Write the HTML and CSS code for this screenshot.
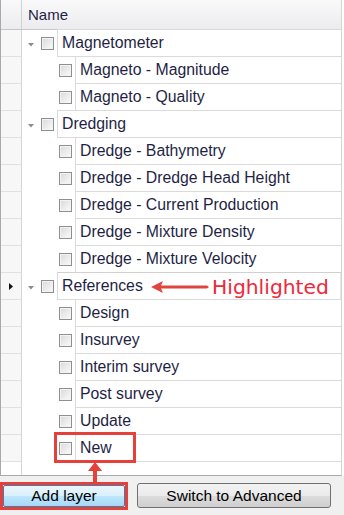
FILE: index.html
```html
<!DOCTYPE html>
<html>
<head>
<meta charset="utf-8">
<link rel="stylesheet" href="styles.css">
</head>
<body>
<div class="grid">
  <div class="hdr"><div class="hind"></div><div class="hname">Name</div></div>

  <div class="row"><div class="ind"></div><div class="exp"><svg class="tri" width="6" height="4" viewBox="0 0 6 4"><polygon points="0,0 6,0 3,3.5" fill="#8c8c8c"/></svg><span class="cb"></span></div><div class="cell gcell">Magnetometer</div></div>
  <div class="row"><div class="ind"></div><div class="pad"></div><div class="cbw"><span class="cb"></span></div><div class="cell">Magneto - Magnitude</div></div>
  <div class="row"><div class="ind"></div><div class="pad"></div><div class="cbw"><span class="cb"></span></div><div class="cell">Magneto - Quality</div></div>

  <div class="row"><div class="ind"></div><div class="exp"><svg class="tri" width="6" height="4" viewBox="0 0 6 4"><polygon points="0,0 6,0 3,3.5" fill="#8c8c8c"/></svg><span class="cb"></span></div><div class="cell gcell">Dredging</div></div>
  <div class="row"><div class="ind"></div><div class="pad"></div><div class="cbw"><span class="cb"></span></div><div class="cell">Dredge - Bathymetry</div></div>
  <div class="row"><div class="ind"></div><div class="pad"></div><div class="cbw"><span class="cb"></span></div><div class="cell">Dredge - Dredge Head Height</div></div>
  <div class="row"><div class="ind"></div><div class="pad"></div><div class="cbw"><span class="cb"></span></div><div class="cell">Dredge - Current Production</div></div>
  <div class="row"><div class="ind"></div><div class="pad"></div><div class="cbw"><span class="cb"></span></div><div class="cell">Dredge - Mixture Density</div></div>
  <div class="row"><div class="ind"></div><div class="pad"></div><div class="cbw"><span class="cb"></span></div><div class="cell">Dredge - Mixture Velocity</div></div>

  <div class="row"><div class="ind"><svg class="focus" width="4" height="7" viewBox="0 0 4 7"><polygon points="0,0 4,3.5 0,7" fill="#111"/></svg></div><div class="exp"><svg class="tri" width="6" height="4" viewBox="0 0 6 4"><polygon points="0,0 6,0 3,3.5" fill="#8c8c8c"/></svg><span class="cb"></span></div><div class="cell gcell sel">References</div></div>
  <div class="row"><div class="ind"></div><div class="pad"></div><div class="cbw"><span class="cb"></span></div><div class="cell">Design</div></div>
  <div class="row"><div class="ind"></div><div class="pad"></div><div class="cbw"><span class="cb"></span></div><div class="cell">Insurvey</div></div>
  <div class="row"><div class="ind"></div><div class="pad"></div><div class="cbw"><span class="cb"></span></div><div class="cell">Interim survey</div></div>
  <div class="row"><div class="ind"></div><div class="pad"></div><div class="cbw"><span class="cb"></span></div><div class="cell">Post survey</div></div>
  <div class="row"><div class="ind"></div><div class="pad"></div><div class="cbw"><span class="cb"></span></div><div class="cell">Update</div></div>
  <div class="row"><div class="ind"></div><div class="pad"></div><div class="cbw"><span class="cb"></span></div><div class="cell">New</div></div>
  <div class="filler"><div class="ind fill"></div></div>
</div>

<div class="panel">
  <div class="hl-btn"><button class="btn add">Add layer</button></div>
  <button class="btn adv">Switch to Advanced</button>
</div>

<div class="box-new"></div>
<svg class="arrow-up" width="14" height="20" viewBox="0 0 14 20"><polygon points="7,0 14,9 9,9 9,20 5,20 5,9 0,9" fill="#e5403a"/></svg>
<svg class="arrow-left" width="58" height="12" viewBox="0 0 58 12"><polygon points="0,6 12,0 10,4.5 56,4.5 58,6 56,7.5 10,7.5 12,12" fill="#e0443e"/></svg>
<div class="hl-text">Highlighted</div>
</body>
</html>
```

FILE: styles.css
```css
html, body {
  margin: 0;
  padding: 0;
}
body {
  width: 344px;
  height: 515px;
  background: #ffffff;
  position: relative;
  overflow: hidden;
  font-family: "Liberation Sans", Arial, sans-serif;
}
.grid {
  width: 340px;
  height: 475px;
  border-left: 1px solid #a9a9a9;
  border-right: 1px solid #d6d6d6;
  border-bottom: 1px solid #a9a9a9;
  background: #fff;
  display: flex;
  flex-direction: column;
}
.hdr {
  display: flex;
  height: 29px;
  flex: none;
  border-bottom: 1px solid #c6c6c6;
  background: linear-gradient(#f9f9fa, #ececef);
}
.hind {
  width: 20px;
  border-right: 1px solid #d2d2d2;
}
.hname {
  padding-left: 6px;
  line-height: 29px;
  font-size: 15px;
  color: #1f1f46;
}
.row {
  display: flex;
  height: 27px;
  flex: none;
}
.ind {
  width: 20px;
  flex: none;
  height: 26px;
  border-right: 1px solid #d4d4d4;
  border-bottom: 1px solid #e0e0e0;
  background: #f7f7f7;
  display: flex;
  align-items: center;
}
.focus {
  margin-left: 8px;
}
.exp {
  width: 35px;
  flex: none;
  display: flex;
  align-items: center;
}
.tri {
  margin-left: 6px;
  margin-right: 7px;
  margin-top: 2px;
}
.pad {
  width: 35px;
  flex: none;
}
.cbw {
  width: 18px;
  flex: none;
  display: flex;
  align-items: center;
}
.cbw .cb {
  margin-left: 2px;
}
.cb {
  width: 11px;
  height: 11px;
  border: 1px solid #8e8f8f;
  background: linear-gradient(135deg, #d9d9d9, #fbfbfb);
  box-shadow: inset 0 0 0 1px #f3f3f3;
  display: block;
}
.cell {
  flex: 1;
  height: 26px;
  line-height: 26px;
  border-left: 1px solid #dadada;
  border-bottom: 1px solid #dadada;
  padding-left: 4px;
  font-size: 15.8px;
  color: #1f1f46;
  white-space: nowrap;
}
.gcell {
  box-shadow: 0 -1px 0 #dadada;
}
.sel {
  box-shadow: 0 -1px 0 #d0d0d0, inset -1px 0 0 #e4e4e4;
}
.filler {
  flex: 1;
  display: flex;
}
.ind.fill {
  height: auto;
  border-bottom: none;
  background: #fff;
}
.panel {
  height: 39px;
  background: #f0f0f0;
  display: flex;
  align-items: center;
  padding-left: 0;
}
.hl-btn {
  width: 122px;
  height: 22px;
  border: 3px solid #e5403a;
  margin-left: 0;
  margin-top: 0;
}
.btn {
  font-family: "Liberation Sans", Arial, sans-serif;
  font-size: 15.5px;
  color: #000;
  padding: 0;
  margin: 0;
  box-sizing: border-box;
}
.add {
  width: 122px;
  height: 22px;
  border: 1px solid #3c7fb1;
  border-radius: 2px;
  background: linear-gradient(#eaf6fd 0%, #d9f0fc 50%, #bee6fd 51%, #a7d9f5 100%);
  display: block;
}
.adv {
  width: 194px;
  height: 25px;
  margin-left: 9px;
  border: 1px solid #707070;
  border-radius: 3px;
  background: linear-gradient(#f2f2f2 0%, #ebebeb 50%, #dddddd 51%, #cfcfcf 100%);
}
.box-new {
  position: absolute;
  left: 54px;
  top: 432px;
  width: 76px;
  height: 25px;
  border: 3px solid #e5403a;
}
.arrow-up {
  position: absolute;
  left: 88px;
  top: 462px;
}
.arrow-left {
  position: absolute;
  left: 151px;
  top: 281px;
}
.hl-text {
  position: absolute;
  left: 212px;
  top: 274px;
  font-family: "DejaVu Sans", Verdana, sans-serif;
  font-size: 20.3px;
  line-height: 26px;
  color: #f0283a;
}
```
